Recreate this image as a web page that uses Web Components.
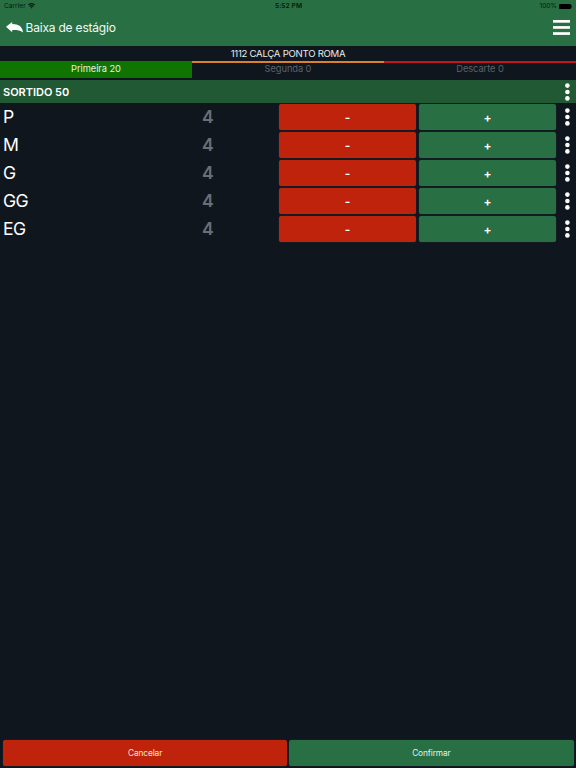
<!DOCTYPE html>
<html lang="pt-BR">
<head>
<meta charset="utf-8">
<title>Baixa de estágio</title>
<style>
  body {
    margin: 0;
    background: #0f161e;
    font-family: Inter, "Liberation Sans", sans-serif;
    color: #fff;
  }
</style>
</head>
<body>
<stage-app>
  <status-bar slot="top" carrier="Carrier" time="5:52 PM" battery="100%"></status-bar>
  <nav-header slot="top">Baixa de estágio</nav-header>
  <product-title slot="top">1112 CALÇA PONTO ROMA</product-title>
  <quality-tabs slot="top">
    <quality-tab active style="--line: #107400">Primeira 20</quality-tab>
    <quality-tab style="--line: #d9822b">Segunda 0</quality-tab>
    <quality-tab style="--line: #c4161c">Descarte 0</quality-tab>
  </quality-tabs>
  <size-group label="SORTIDO 50">
    <size-row size="P" amount="4"></size-row>
    <size-row size="M" amount="4"></size-row>
    <size-row size="G" amount="4"></size-row>
    <size-row size="GG" amount="4"></size-row>
    <size-row size="EG" amount="4"></size-row>
  </size-group>
  <action-button slot="actions" kind="danger">Cancelar</action-button>
  <action-button slot="actions">Confirmar</action-button>
</stage-app>

<script>
  class StageApp extends HTMLElement {
    constructor() {
      super();
      this.attachShadow({ mode: 'open' });
      this.shadowRoot.innerHTML = `
        <style>
          :host { display: flex; flex-direction: column; height: 100vh; overflow: hidden; }
          main { flex: 1; }
          footer {
            display: grid;
            grid-template-columns: 1fr 1fr;
            gap: 2px;
            height: 26px;
            padding: 0 2.5px 2px 3px;
          }
        </style>
        <slot name="top"></slot>
        <main><slot></slot></main>
        <footer><slot name="actions"></slot></footer>
      `;
    }
  }

  class StatusBar extends HTMLElement {
    constructor() {
      super();
      this.attachShadow({ mode: 'open' });
    }

    connectedCallback() {
      this.shadowRoot.innerHTML = `
        <style>
          :host {
            display: grid;
            grid-template-columns: 1fr auto 1fr;
            align-items: center;
            box-sizing: border-box;
            height: 12px;
            padding: 0 4px 0 4px;
            background: #287044;
            color: #07180d;
            font-size: 6.6px;
            line-height: 12px;
          }
          span { display: flex; align-items: center; }
          .left { gap: 2px; }
          .time { font-weight: 600; letter-spacing: 0.1px; padding-left: 1px; }
          .right { justify-content: flex-end; gap: 2px; }
          svg { display: block; }
        </style>
        <span class="left">${this.getAttribute('carrier')}
          <svg width="7" height="6" viewBox="0 0 7 6" fill="none" stroke="currentColor" stroke-width="1.2">
            <path d="M0.4 2Q3.5 -0.8 6.6 2M1.6 3.5Q3.5 1.8 5.4 3.5"/>
            <path d="M2.5 4.5Q3.5 3.7 4.5 4.5L3.5 5.6Z" fill="currentColor" stroke="none"/>
          </svg>
        </span>
        <span class="time">${this.getAttribute('time')}</span>
        <span class="right">${this.getAttribute('battery')}
          <svg width="13" height="5" viewBox="0 0 13 5" fill="#000">
            <rect width="12" height="5" rx="1"/><rect x="12.2" y="1.5" width="0.8" height="2"/>
          </svg>
        </span>
      `;
    }
  }

  class NavHeader extends HTMLElement {
    constructor() {
      super();
      this.attachShadow({ mode: 'open' });
      this.shadowRoot.innerHTML = `
        <style>
          :host {
            display: flex;
            align-items: center;
            box-sizing: border-box;
            height: 34px;
            padding: 0 6px 3px;
            background: #287044;
            font-size: 12px;
            letter-spacing: -0.2px;
          }
          .title { flex: 1; margin-left: 2.5px; color: #f2f8f4; }
          svg { display: block; }
        </style>
        <svg width="17" height="11" viewBox="0 0 17 11" fill="#fff">
          <path d="M0 4.8 6.2 0V2.1C12.8 2.1 16.4 4.8 17 10.4C14.2 8.4 11.5 7.9 6.2 8V10.2Z"/>
        </svg>
        <span class="title"><slot></slot></span>
        <svg width="17" height="15" viewBox="0 0 17 15" fill="#fff">
          <rect width="17" height="2.7"/>
          <rect y="6.1" width="17" height="2.7"/>
          <rect y="12.2" width="17" height="2.7"/>
        </svg>
      `;
    }
  }

  class ProductTitle extends HTMLElement {
    constructor() {
      super();
      this.attachShadow({ mode: 'open' });
      this.shadowRoot.innerHTML = `
        <style>
          :host {
            display: block;
            height: 15px;
            text-align: center;
            font-size: 9.6px;
            letter-spacing: -0.27px;
            line-height: 15px;
            color: #e9ebed;
          }
        </style>
        <slot></slot>
      `;
    }
  }

  class QualityTabs extends HTMLElement {
    constructor() {
      super();
      this.attachShadow({ mode: 'open' });
      this.shadowRoot.innerHTML = `
        <style>
          :host { display: grid; grid-template-columns: repeat(3, 1fr); height: 19px; }
        </style>
        <slot></slot>
      `;
    }
  }

  class QualityTab extends HTMLElement {
    constructor() {
      super();
      this.attachShadow({ mode: 'open' });
      this.shadowRoot.innerHTML = `
        <style>
          :host {
            display: block;
            box-sizing: border-box;
            height: 17px;
            border-top: 2px solid var(--line);
            text-align: center;
            font-size: 9.3px;
            letter-spacing: -0.07px;
            line-height: 12px;
            color: #5c6268;
          }
          :host([active]) { background: var(--line); color: #e4f3e1; }
        </style>
        <slot></slot>
      `;
    }
  }

  class MoreDots extends HTMLElement {
    constructor() {
      super();
      this.attachShadow({ mode: 'open' });
      this.shadowRoot.innerHTML = `
        <style>
          :host { display: block; width: 5px; height: 18px; }
          svg { display: block; }
        </style>
        <svg width="5" height="18" viewBox="0 0 5 18" fill="#fff">
          <circle cx="2.4" cy="2.6" r="2.3"/>
          <circle cx="2.4" cy="9" r="2.3"/>
          <circle cx="2.4" cy="15.4" r="2.3"/>
        </svg>
      `;
    }
  }

  class SizeGroup extends HTMLElement {
    constructor() {
      super();
      this.attachShadow({ mode: 'open' });
    }

    connectedCallback() {
      this.shadowRoot.innerHTML = `
        <style>
          :host { display: block; }
          header {
            display: flex;
            align-items: center;
            justify-content: space-between;
            height: 23px;
            padding: 0 6px 0 3px;
            background: #205933;
            font-size: 11px;
            font-weight: 600;
            letter-spacing: -0.02px;
          }
          .rows { display: grid; grid-auto-rows: 26px; gap: 2px; padding-top: 1px; }
        </style>
        <header><span>${this.getAttribute('label')}</span><more-dots></more-dots></header>
        <div class="rows"><slot></slot></div>
      `;
    }
  }

  class SizeRow extends HTMLElement {
    constructor() {
      super();
      this.attachShadow({ mode: 'open' });
    }

    connectedCallback() {
      this.shadowRoot.innerHTML = `
        <style>
          :host {
            display: grid;
            grid-template-columns: 133.5px 136.5px 137px 137px 5px;
            column-gap: 3px;
            align-items: center;
            padding-left: 3px;
            font-size: 17.6px;
            line-height: 26px;
          }
          .size { letter-spacing: -0.6px; }
          .amount { text-align: center; color: #6b6f74; font-weight: 600; }
          action-button { height: 26px; }
          more-dots { margin-left: 6px; }
        </style>
        <span class="size">${this.getAttribute('size')}</span>
        <span class="amount">${this.getAttribute('amount')}</span>
        <action-button kind="danger" bold>-</action-button>
        <action-button bold>+</action-button>
        <more-dots></more-dots>
      `;
    }
  }

  class ActionButton extends HTMLElement {
    constructor() {
      super();
      this.attachShadow({ mode: 'open' });
      this.shadowRoot.innerHTML = `
        <style>
          :host { display: block; }
          button {
            display: block;
            width: 100%;
            height: 100%;
            padding: 0;
            border: 0;
            border-radius: 2.5px;
            background: #287044;
            box-shadow: 0 0 1px #4b5056;
            color: #e6f3e9;
            font: 400 8.3px/1 Inter, "Liberation Sans", sans-serif;
            letter-spacing: -0.1px;
          }
          :host([kind="danger"]) button { background: #c0230b; color: #fbe3dc; }
          :host([bold]) button { padding-top: 1px; font-size: 12px; font-weight: 600; color: #fff; }
        </style>
        <button type="button"><slot></slot></button>
      `;
    }
  }

  customElements.define('stage-app', StageApp);
  customElements.define('status-bar', StatusBar);
  customElements.define('nav-header', NavHeader);
  customElements.define('product-title', ProductTitle);
  customElements.define('quality-tabs', QualityTabs);
  customElements.define('quality-tab', QualityTab);
  customElements.define('more-dots', MoreDots);
  customElements.define('action-button', ActionButton);
  customElements.define('size-group', SizeGroup);
  customElements.define('size-row', SizeRow);
</script>
</body>
</html>
